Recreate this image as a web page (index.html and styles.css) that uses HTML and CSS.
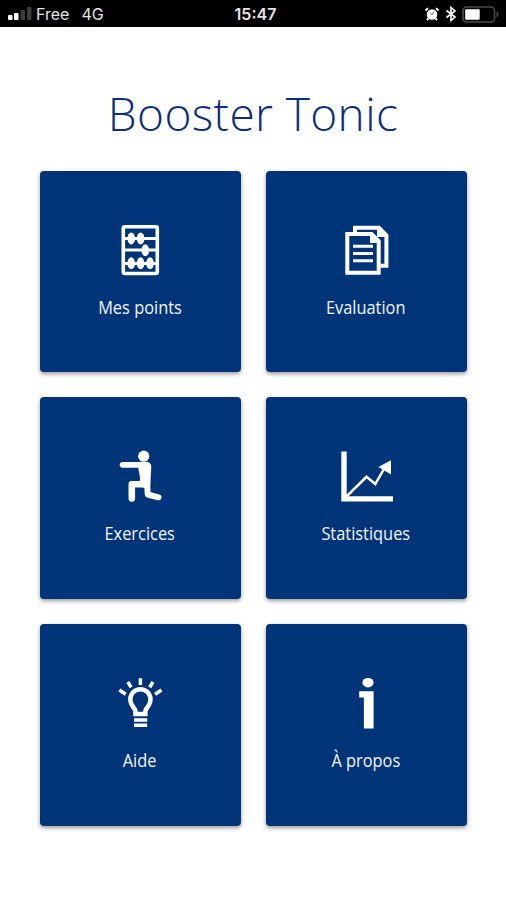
FILE: index.html
```html
<!DOCTYPE html>
<html lang="fr">
<head>
    <meta charset="UTF-8">
    <meta name="viewport" content="width=device-width, initial-scale=1.0">
    <title>Booster Tonic</title>
    <link rel="stylesheet" href="styles.css">
</head>
<body>
    <header class="status-bar">
        <div class="status-left">
            <svg class="signal" width="25" height="14" viewBox="0 0 25 14">
                <rect x="0" y="8" width="4.5" height="5" rx="1" fill="#fff"/>
                <rect x="6" y="6" width="4.5" height="7" rx="1" fill="#fff"/>
                <rect x="12.5" y="3" width="4.5" height="10" rx="1" fill="#3c3c3c"/>
                <rect x="19" y="0" width="4.5" height="13" rx="1" fill="#3c3c3c"/>
            </svg>
            <span class="carrier">Free</span>
            <span class="network">4G</span>
        </div>
        <span class="time">15:47</span>
        <div class="status-right">
            <svg width="16" height="14" viewBox="0 0 16 14">
                <circle cx="8" cy="7.5" r="5.3" fill="#fff"/>
                <path d="M1.5 3.5 4 1.2M14.5 3.5 12 1.2M4.5 11.5 3 13M11.5 11.5 13 13" stroke="#fff" stroke-width="2"/>
                <path d="M6 5.5 8 8 10 4.5" fill="none" stroke="#777"/>
            </svg>
            <svg width="12" height="16" viewBox="0 0 12 16">
                <path d="M1.5 4.5 10 11 6 14.5V1.5L10 5 1.5 11.5" fill="none" stroke="#fff" stroke-width="1.6"/>
            </svg>
            <svg class="battery" width="38" height="17" viewBox="0 0 38 17">
                <rect x="1" y="1" width="31.5" height="15" rx="3.5" fill="none" stroke="#4c4c4c" stroke-width="1.6"/>
                <rect x="3.2" y="3.2" width="14.5" height="10.6" rx="1" fill="#fff"/>
                <path d="M34.5 5.5v6q2-1 2-3t-2-3z" fill="#4c4c4c"/>
            </svg>
        </div>
    </header>

    <h1 class="title">Booster Tonic</h1>

    <main class="menu">
        <a class="tile">
            <svg class="icon" viewBox="0 0 60 60">
                <rect x="13.3" y="6.7" width="34" height="46.8" rx="1.5" fill="none" stroke="#fff" stroke-width="3.6"/>
                <path d="M13 18.5h34M13 30h34M13 43.5h34" stroke="#fff" stroke-width="2.8"/>
                <ellipse cx="21.3" cy="18.5" rx="3.8" ry="6"/>
                <ellipse cx="30.6" cy="18.5" rx="3.8" ry="6"/>
                <ellipse cx="35.3" cy="30.3" rx="3.8" ry="6"/>
                <ellipse cx="21.2" cy="43.2" rx="3.8" ry="6"/>
                <ellipse cx="30.6" cy="43.2" rx="3.8" ry="6"/>
                <ellipse cx="40" cy="43.2" rx="3.8" ry="6"/>
            </svg>
            <span class="label">Mes points</span>
        </a>
        <a class="tile">
            <svg class="icon" viewBox="0 0 60 60">
                <path d="M19 12V7.7h24l7.4 7.5v30.5h-6" fill="none" stroke="#fff" stroke-width="4"/>
                <path d="M41 6v11h11z"/>
                <path d="M11.3 14h24.2l7.2 7.2v31.6H11.3z" fill="none" stroke="#fff" stroke-width="4"/>
                <path d="M34 13v10h10z"/>
                <path d="M17 26.2h20M17 33.5h20M17 40.7h20" stroke="#fff" stroke-width="3"/>
            </svg>
            <span class="label">Evaluation</span>
        </a>
        <a class="tile">
            <svg class="icon" viewBox="0 0 60 60">
                <circle cx="33.7" cy="10.2" r="5.6"/>
                <path d="M12.6 18.8H36" fill="none" stroke="#fff" stroke-width="5.8" stroke-linecap="round"/>
                <path d="M28 16h9.5q3.8.8 3.8 5l-1 18-4.5 4-6.5-4 .8-7-2-11z"/>
                <path d="M36 38.3H21.8V52.4" fill="none" stroke="#fff" stroke-width="6.6" stroke-linecap="round" stroke-linejoin="round"/>
                <path d="M37.2 36 37.7 48.5 48.5 51.3" fill="none" stroke="#fff" stroke-width="6" stroke-linecap="round" stroke-linejoin="round"/>
            </svg>
            <span class="label">Exercices</span>
        </a>
        <a class="tile">
            <svg class="icon" viewBox="0 0 60 60">
                <path d="M8 5.5v47.4h49" fill="none" stroke="#fff" stroke-width="5.4"/>
                <path d="M10 51 30.5 30.8 39.3 38 48.5 22" fill="none" stroke="#fff" stroke-width="2.5"/>
                <path d="M55 14.2v14.2L42.4 21z"/>
            </svg>
            <span class="label">Statistiques</span>
        </a>
        <a class="tile">
            <svg class="icon" viewBox="0 0 60 60">
                <path d="M25.4 41v-3.5C24.1 34.5 20.3 32 20.3 26.3a10.1 10.1 0 0 1 20.2 0C40.5 32 36.7 34.5 35.4 37.5V41z" fill="none" stroke="#fff" stroke-width="4.4"/>
                <path d="M24 47.1h13.2M24 52.2h13.2" stroke="#fff" stroke-width="3.5"/>
                <path d="M30.4 5.3v6.8M17.9 8.8l3.2 5.6M42.9 8.8l-3.2 5.6M9.3 17l6.4 4.2M51.5 17l-6.4 4.2" stroke="#fff" stroke-width="3.5"/>
            </svg>
            <span class="label">Aide</span>
        </a>
        <a class="tile">
            <svg class="icon" viewBox="0 0 60 60">
                <ellipse cx="32" cy="9.7" rx="5.6" ry="4.8"/>
                <path d="M23.2 18.2h14.4v37.2h-9.7v-31h-4.7z"/>
            </svg>
            <span class="label">À propos</span>
        </a>
    </main>
</body>
</html>
```

FILE: styles.css
```css
body {
    margin: 0;
    background-color: #fff;
    font-family: "Open Sans", "Noto Sans", sans-serif;
}
.status-bar {
    display: grid;
    grid-template-columns: 1fr auto 1fr;
    align-items: center;
    height: 27px;
    padding: 0 6px 0 8px;
    box-sizing: border-box;
    background-color: #000;
    color: #e4e4e4;
    font-family: Inter, "Liberation Sans", sans-serif;
    font-size: 16px;
    line-height: 27px;
}
.status-left {
    display: flex;
    align-items: center;
}
.carrier {
    margin: 1px 0 0 3px;
}
.network {
    margin: 1px 0 0 12px;
}
.time {
    padding: 1px 0 0 3px;
    font-weight: 600;
}
.status-right {
    display: flex;
    align-items: center;
    justify-content: flex-end;
    gap: 5px;
}
.title {
    margin: 54px 0 0;
    height: 89.7px;
    line-height: 64px;
    text-align: center;
    font-size: 46px;
    font-weight: 300;
    letter-spacing: 0.4px;
    color: #0c2d7c;
}
.menu {
    display: grid;
    grid-template-columns: 201px 201px;
    grid-auto-rows: 201.8px;
    gap: 25px;
    padding: 0 0 40px 40px;
}
.tile {
    display: flex;
    flex-direction: column;
    align-items: center;
    padding: 49px 1px 0 0;
    box-sizing: border-box;
    border-radius: 4px;
    background-color: #003478;
    box-shadow: 0 2px 4px rgba(0, 0, 0, 0.4);
    color: #f3f5fa;
}
.icon {
    width: 60px;
    height: 60px;
    margin-left: -1px;
    fill: #fff;
}
.label {
    margin-top: 14px;
    font-size: 18px;
    font-weight: 500;
    line-height: 26px;
    transform: scaleX(0.91);
}
```
